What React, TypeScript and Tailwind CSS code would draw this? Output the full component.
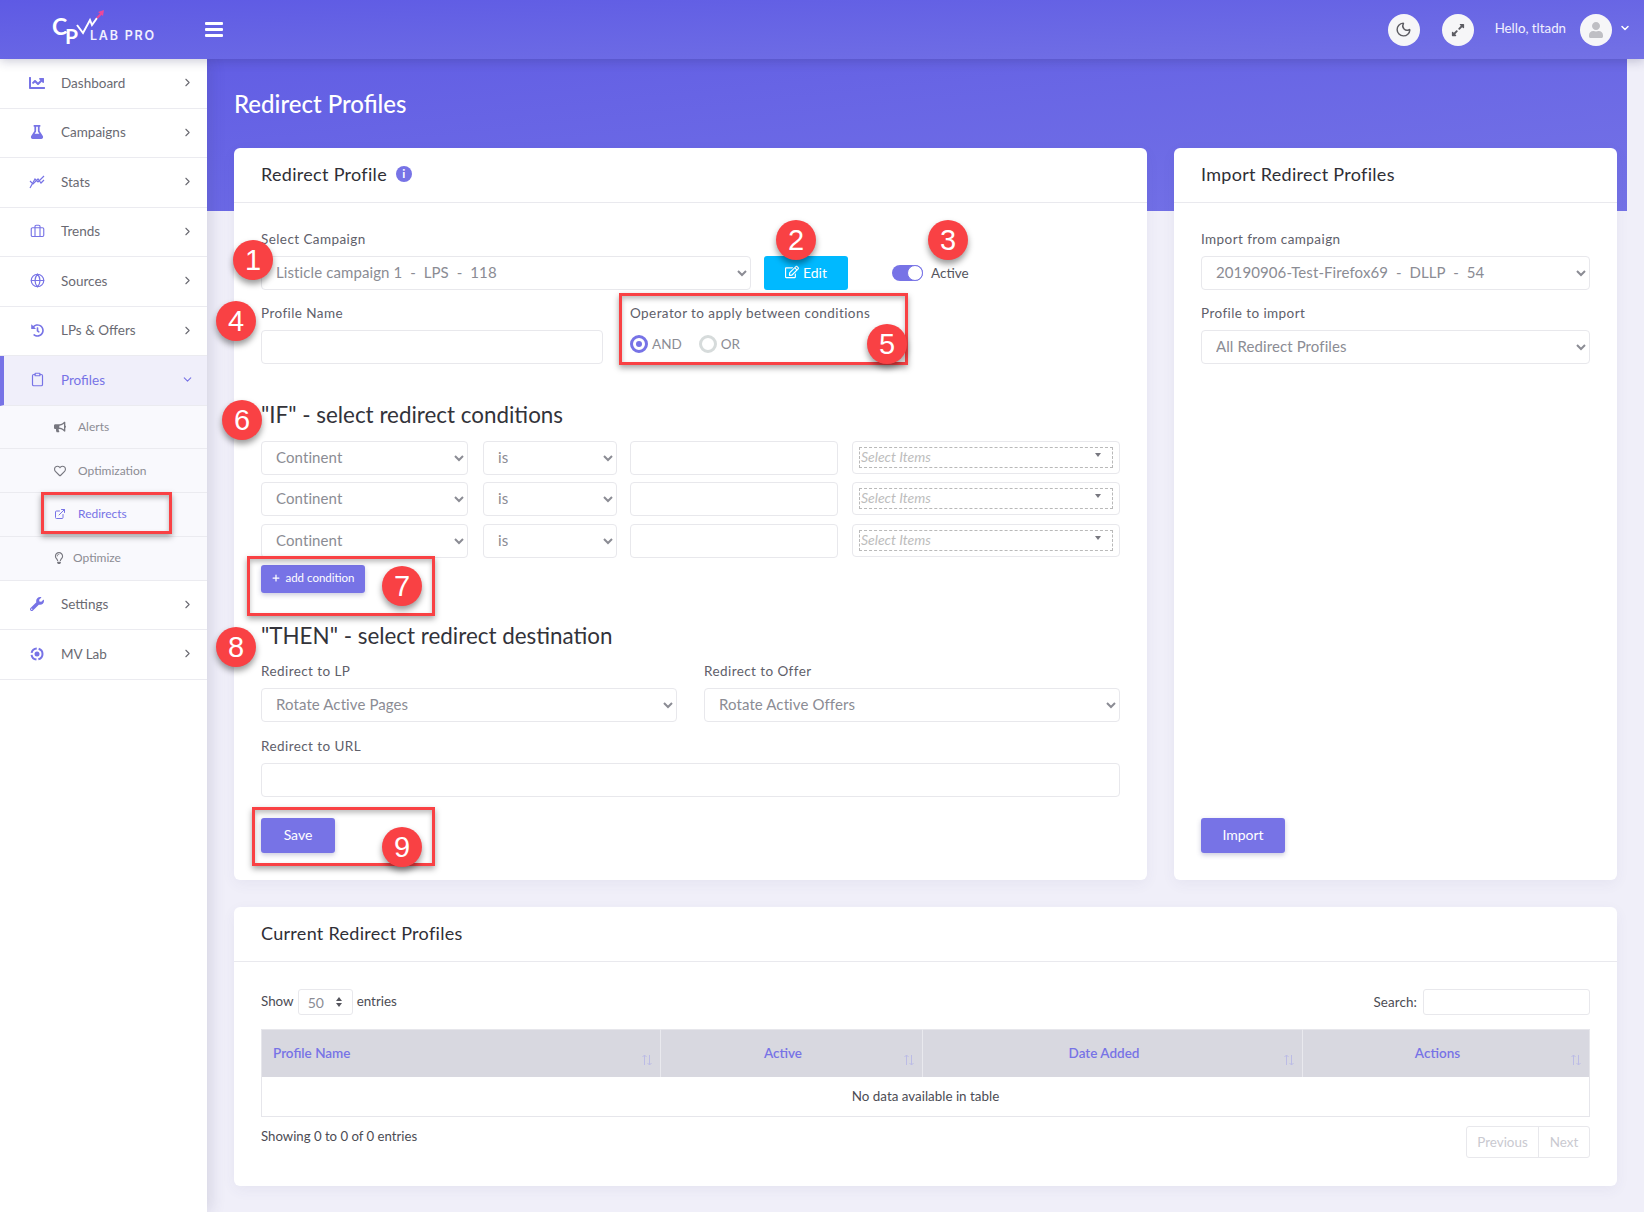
import React from 'react';
import { ChevronRight, ChevronDown, Briefcase, Globe, Clipboard, Moon, Plus, ExternalLink } from 'lucide-react';
import {
  FaChartLine,
  FaFlask,
  FaHistory,
  FaBullhorn,
  FaRegHeart,
  FaRegLightbulb,
  FaWrench,
  FaRegEdit,
  FaExpandAlt,
  FaUser,
} from 'react-icons/fa';

// ── Logo and small drawings ───────────────────────────────────────────────────
function Logo() {
  return (
    <svg width="112" height="46" viewBox="0 0 112 46" className="shrink-0">
      <text x="0" y="28" fill="#fff" fontSize="23" fontWeight="700" fontFamily="Lato, sans-serif">C</text>
      <text x="13" y="37" fill="#fff" fontSize="21" fontWeight="700" fontFamily="Lato, sans-serif">P</text>
      <polyline points="25,18 31,26 38,13 40,18 45,11" fill="none" stroke="#fff" strokeWidth="2" />
      <polyline points="45,11 50,6" fill="none" stroke="#ec4899" strokeWidth="2" />
      <polygon points="46,5 52,3 51,9" fill="#ec4899" />
      <text x="38" y="33" fill="#f1f0ff" fontSize="12.5" letterSpacing="1.8" fontWeight="600" fontFamily="Inter, sans-serif">LAB PRO</text>
    </svg>
  );
}

function StatsIcon() {
  return (
    <svg width="16" height="14" viewBox="0 0 16 14" fill="none" stroke="#7773e6" strokeWidth="1.2">
      <polyline points="1,13 6,4 9,7 15,1" />
      <polyline points="1,6 4,9 9,4 12,8 15,5" />
    </svg>
  );
}

function MvIcon() {
  return (
    <svg width="14" height="14" viewBox="0 0 14 14" fill="none">
      <circle cx="7" cy="7" r="5.5" stroke="#7773e6" strokeWidth="2" strokeDasharray="7 2" />
      <circle cx="7" cy="7" r="2.5" fill="#7773e6" />
    </svg>
  );
}

// ── Sidebar ───────────────────────────────────────────────────────────────────
function NavItem({ icon, label, active }: { icon: React.ReactNode; label: string; active?: boolean }) {
  return (
    <div
      className={`flex h-[49.5px] items-center border-b border-[#ebebf0] pb-[1px] text-[13.5px] ${
        active ? 'border-l-4 border-l-[#7773e6] bg-[#f0effa] pl-[24px] text-[#7773e6]' : 'pl-[28px] text-[#6a6a72]'
      }`}
    >
      <span className="flex w-[18px] justify-center text-[#7773e6]">{icon}</span>
      <span className="ml-[15px] flex-1">{label}</span>
      {active ? (
        <ChevronDown className="mr-[13px] h-[13px] w-[13px] text-[#7773e6]" />
      ) : (
        <ChevronRight className="mr-[13px] h-[13px] w-[13px] text-[#6a6a72]" />
      )}
    </div>
  );
}

function SubItem({ icon, label, active, tight }: { icon: React.ReactNode; label: string; active?: boolean; tight?: boolean }) {
  return (
    <div
      className={`flex h-[43.75px] items-center border-b border-[#ebebf0] bg-[#f9f9fd] text-[12px] ${
        active ? 'text-[#7773e6]' : 'text-[#8c8c94]'
      } ${tight ? 'pl-[53px]' : 'pl-[54px]'}`}
    >
      <span className={`flex w-[12px] justify-center ${active ? 'text-[#7773e6]' : 'text-[#77777f]'}`}>{icon}</span>
      <span className={tight ? 'ml-[8px]' : 'ml-[12px]'}>{label}</span>
    </div>
  );
}

function Sidebar() {
  return (
    <aside className="relative z-10 w-[207px] shrink-0 bg-white shadow-[4px_0_14px_rgba(60,60,100,0.14)]">
      <NavItem icon={<FaChartLine size={16} />} label="Dashboard" />
      <NavItem icon={<FaFlask size={14} />} label="Campaigns" />
      <NavItem icon={<StatsIcon />} label="Stats" />
      <NavItem icon={<Briefcase size={15} strokeWidth={1.8} />} label="Trends" />
      <NavItem icon={<Globe size={15} strokeWidth={1.9} />} label="Sources" />
      <NavItem icon={<FaHistory size={13} />} label="LPs & Offers" />
      <NavItem icon={<Clipboard size={15} strokeWidth={1.9} />} label="Profiles" active />
      <SubItem icon={<FaBullhorn size={12} />} label="Alerts" />
      <SubItem icon={<FaRegHeart size={12} />} label="Optimization" />
      <SubItem icon={<ExternalLink size={12} strokeWidth={2} />} label="Redirects" active />
      <SubItem icon={<FaRegLightbulb size={12} />} label="Optimize" tight />
      <NavItem icon={<FaWrench size={14} />} label="Settings" />
      <NavItem icon={<MvIcon />} label="MV Lab" />
    </aside>
  );
}

// ── Form pieces ───────────────────────────────────────────────────────────────
function Label({ children }: { children: React.ReactNode }) {
  return <div className="mb-[7px] h-[20px] text-[13.5px] leading-[20px] tracking-[0.42px] text-[#60606a]">{children}</div>;
}

function Select({ value, className = '' }: { value: string; className?: string }) {
  return (
    <select
      defaultValue={value}
      className={`h-[34px] rounded-[4px] border border-[#e8e8ec] bg-white pb-[2px] pl-[10px] text-[15px] tracking-[0.1px] text-[#8b8c94] ${className}`}
    >
      <option>{value}</option>
    </select>
  );
}

function TextInput({ className = '' }: { className?: string }) {
  return <input type="text" className={`h-[34px] rounded-[4px] border border-[#e8e8ec] bg-white ${className}`} />;
}

function ConditionRow({ className = '' }: { className?: string }) {
  return (
    <div className={`flex ${className}`}>
      <Select value="Continent" className="w-[207px]" />
      <Select value="is" className="ml-[15px] w-[134px]" />
      <TextInput className="ml-[13px] w-[208px]" />
      <div className="ml-[14px] flex h-[33px] w-[268px] rounded-[4px] border border-[#e8e8ec] px-[6px] py-[5px]">
        <div className="flex flex-1 justify-between border border-dashed border-[#b9b9b9] pl-[1px] pr-[11px] text-[14px] italic leading-[18px] text-[#bdbdbd]">
          <span>Select Items</span>
          <span className="mt-[5px] h-0 w-0 border-x-[3px] border-t-[4px] border-x-transparent border-t-[#77777f]" />
        </div>
      </div>
    </div>
  );
}

function Radio({ on, label }: { on?: boolean; label: string }) {
  return (
    <div className="flex items-center">
      <span
        className={`flex h-[18px] w-[18px] items-center justify-center rounded-full border-[3px] ${
          on ? 'border-[#7773e6]' : 'border-[#d6dbdb]'
        }`}
      >
        {on && <span className="h-[6px] w-[6px] rounded-full bg-[#7773e6]" />}
      </span>
      <span className="ml-[4px] text-[13.5px] text-[#8b8c94]">{label}</span>
    </div>
  );
}

function Button({ children, className = '' }: { children: React.ReactNode; className?: string }) {
  return (
    <button
      type="button"
      className={`flex items-center justify-center rounded-[3px] bg-[#7773e6] pb-[2px] text-white shadow-[0_2px_5px_rgba(80,80,140,0.3)] ${className}`}
    >
      {children}
    </button>
  );
}

function Card({ title, info, className = '', children }: { title: string; info?: boolean; className?: string; children: React.ReactNode }) {
  return (
    <section className={`flex flex-col rounded-[6px] bg-white shadow-[0_4px_14px_rgba(70,70,120,0.06)] ${className}`}>
      <div className="flex h-[55px] shrink-0 items-center border-b border-[#e9e9ee] pb-[2px] pl-[27px] text-[18px] tracking-[0.3px] text-[#2f2f36]">
        {title}
        {info && (
          <span className="ml-[9px] flex h-[16px] w-[16px] items-center justify-center rounded-full bg-[#7773e6] text-[12px] font-bold leading-none text-white">
            i
          </span>
        )}
      </div>
      {children}
    </section>
  );
}

// ── Cards ─────────────────────────────────────────────────────────────────────
function RedirectProfileCard() {
  return (
    <Card title="Redirect Profile" info>
      <div className="flex flex-col px-[27px] pb-[27px] pt-[26px]">
        <div className="flex items-end">
          <div className="w-[490px]">
            <Label>Select Campaign</Label>
            <Select value={'Listicle campaign 1 \u00a0-\u00a0 LPS \u00a0-\u00a0 118'} className="w-full" />
          </div>
          <button
            type="button"
            className="ml-[13px] flex h-[34px] w-[84px] items-center justify-center gap-[4px] rounded-[3px] bg-[#00b9ff] pb-[2px] text-[14px] text-white"
          >
            <FaRegEdit size={14} />
            Edit
          </button>
          <div className="mb-[9px] ml-[44px] flex h-[16px] items-center">
            <span className="flex h-[16px] w-[31px] justify-end rounded-full bg-[#7773e6]">
              <span className="h-[16px] w-[16px] rounded-full border border-[#7773e6] bg-white" />
            </span>
            <span className="ml-[8px] text-[13.5px] text-[#55555d]">Active</span>
          </div>
        </div>

        <div className="mt-[13px] flex">
          <div className="w-[342px]">
            <Label>Profile Name</Label>
            <TextInput className="w-full" />
          </div>
          <div className="ml-[27px]">
            <Label>Operator to apply between conditions</Label>
            <div className="flex gap-[17px] pt-[4px]">
              <Radio on label="AND" />
              <Radio label="OR" />
            </div>
          </div>
        </div>

        <h2 className="mt-[35px] h-[30px] text-[22.4px] leading-[32px] text-[#33333a]">"IF" - select redirect conditions</h2>
        <ConditionRow className="mt-[12px]" />
        <ConditionRow className="mt-[7px]" />
        <ConditionRow className="mt-[8px]" />
        <Button className="mt-[7px] h-[28px] w-[104px] gap-[4px] text-[11.5px]">
          <Plus size={10} strokeWidth={3} />
          add condition
        </Button>

        <h2 className="mt-[27px] h-[30px] text-[22.4px] leading-[32px] text-[#33333a]">"THEN" - select redirect destination</h2>
        <div className="mt-[11px] grid grid-cols-[416px_1fr] gap-x-[27px]">
          <div>
            <Label>Redirect to LP</Label>
            <Select value="Rotate Active Pages" className="w-full" />
          </div>
          <div>
            <Label>Redirect to Offer</Label>
            <Select value="Rotate Active Offers" className="w-full" />
          </div>
        </div>
        <div className="mt-[14px]">
          <Label>Redirect to URL</Label>
          <TextInput className="w-full" />
        </div>
        <Button className="mt-[21px] h-[35px] w-[74px] text-[14px]">Save</Button>
      </div>
    </Card>
  );
}

function ImportCard() {
  return (
    <Card title="Import Redirect Profiles">
      <div className="flex flex-1 flex-col px-[27px] pb-[27px] pt-[26px]">
        <Label>Import from campaign</Label>
        <Select value={'20190906-Test-Firefox69 \u00a0-\u00a0 DLLP \u00a0-\u00a0 54'} className="w-full" />
        <div className="mt-[13px]">
          <Label>Profile to import</Label>
          <Select value="All Redirect Profiles" className="w-full" />
        </div>
        <Button className="mt-auto h-[35px] w-[84px] text-[14px]">Import</Button>
      </div>
    </Card>
  );
}

function SortArrows() {
  return (
    <svg width="12" height="12" viewBox="0 0 12 12" fill="none" stroke="#bcbce6" strokeWidth="1" className="absolute bottom-[11px] right-[7px]">
      <path d="M3.5 11V1M1.5 3l2-2 2 2" />
      <path d="M8.5 1v10M6.5 9l2 2 2-2" />
    </svg>
  );
}

function Th({ label, className = '' }: { label: string; className?: string }) {
  return (
    <th className={`relative h-[47px] border-r border-[#e9e9ee] text-[13.5px] font-semibold text-[#7773e6] last:border-r-0 ${className}`}>
      {label}
      <SortArrows />
    </th>
  );
}

function CurrentProfilesCard() {
  return (
    <Card title="Current Redirect Profiles" className="mt-[27px] h-[279px]">
      <div className="px-[27px] pt-[27px] text-[13.4px] text-[#4c4c54]">
        <div className="flex h-[26px] items-center justify-between">
          <div className="flex items-center pb-[2px]">
            Show
            <span className="mx-[4px] mb-[-2px] flex h-[26px] w-[55px] items-center justify-between rounded-[3px] border border-[#e8e8ec] pl-[9px] pr-[10px] text-[14px] text-[#8b8c94]">
              50
              <span className="flex flex-col gap-[2px]">
                <span className="h-0 w-0 border-x-[3px] border-b-[4px] border-x-transparent border-b-[#55555d]" />
                <span className="h-0 w-0 border-x-[3px] border-t-[4px] border-x-transparent border-t-[#55555d]" />
              </span>
            </span>
            entries
          </div>
          <div className="flex items-center tracking-[0.1px]">
            Search:
            <input type="text" className="ml-[6px] h-[26px] w-[167px] rounded-[3px] border border-[#e8e8ec]" />
          </div>
        </div>

        <table className="mt-[14px] w-full table-fixed border border-[#e6e6eb]">
          <thead>
            <tr className="bg-[#d8d8e0]">
              <Th label="Profile Name" className="w-[399px] pl-[11px] text-left" />
              <Th label="Active" className="w-[262px] pr-[17px]" />
              <Th label="Date Added" className="w-[380px] pr-[17px]" />
              <Th label="Actions" className="pr-[17px]" />
            </tr>
          </thead>
          <tbody>
            <tr>
              <td colSpan={4} className="h-[40px] text-center">
                No data available in table
              </td>
            </tr>
          </tbody>
        </table>

        <div className="mt-[9px] flex items-start justify-between">
          <div className="mt-[1px] text-[13.2px]">Showing 0 to 0 of 0 entries</div>
          <div className="flex h-[32px] rounded-[3px] border border-[#e8e8ec] text-[#c9c9d0]">
            <span className="flex w-[72px] items-center justify-center border-r border-[#e8e8ec]">Previous</span>
            <span className="flex w-[50px] items-center justify-center">Next</span>
          </div>
        </div>
      </div>
    </Card>
  );
}

// ── Annotations drawn over the screenshot ─────────────────────────────────────
function Badge({ n, className }: { n: number; className: string }) {
  return (
    <div
      className={`pointer-events-none absolute z-30 flex h-[40px] w-[40px] items-center justify-center rounded-full bg-[#f94144] text-[29px] leading-none text-white shadow-[0_4px_6px_rgba(0,0,0,0.4)] [font-family:'Liberation_Sans',sans-serif] ${className}`}
    >
      {n}
    </div>
  );
}

function RedBox({ className }: { className: string }) {
  return (
    <div className={`pointer-events-none absolute z-20 border-[3px] border-[#f94144] shadow-[0_3px_6px_rgba(0,0,0,0.35),inset_0_3px_5px_rgba(0,0,0,0.25)] ${className}`} />
  );
}

export default function App() {
  return (
    <div className="relative flex min-h-[1212px] flex-col bg-[#f0eff9] [font-family:Lato,sans-serif]">
      <header className="relative z-20 flex h-[59px] shrink-0 items-center bg-gradient-to-br from-[#5e5ae4] to-[#7371e5] pl-[52px] pr-[13px] shadow-[0_2px_10px_rgba(40,40,90,0.25)]">
        <Logo />
        <div className="ml-[41px] flex w-[18px] flex-col gap-[3px]">
          <span className="h-[3px] rounded-[1px] bg-white" />
          <span className="h-[3px] rounded-[1px] bg-white" />
          <span className="h-[3px] rounded-[1px] bg-white" />
        </div>
        <div className="ml-auto flex items-center">
          <span className="flex h-[32px] w-[32px] items-center justify-center rounded-full bg-[#f6f6f8] text-[#5c5c62]">
            <Moon size={17} strokeWidth={2} />
          </span>
          <span className="ml-[22px] flex h-[32px] w-[32px] items-center justify-center rounded-full bg-[#f6f6f8] text-[#5c5c62]">
            <FaExpandAlt size={14} />
          </span>
          <span className="ml-[21px] pb-[1px] text-[13.3px] text-[#f1f0ff]">Hello, tltadn</span>
          <span className="ml-[14px] flex h-[32px] w-[32px] items-center justify-center rounded-full bg-[#f6f6f8] text-[#bfbfc4]">
            <FaUser size={16} />
          </span>
          <ChevronDown className="mb-[3px] ml-[7px] h-[12px] w-[12px] text-white" strokeWidth={3} />
        </div>
      </header>

      <div className="flex flex-1">
        <Sidebar />
        <main className="relative min-w-0 flex-1 px-[27px]">
          <div className="absolute left-0 right-[17px] top-0 h-[152px] bg-gradient-to-br from-[#625ee4] to-[#7472e6]" />
          <div className="relative">
            <h1 className="flex h-[89px] items-center text-[24px] font-medium text-white">Redirect Profiles</h1>
            <div className="grid grid-cols-[913px_443px] gap-[27px]">
              <RedirectProfileCard />
              <ImportCard />
            </div>
            <CurrentProfilesCard />
          </div>
        </main>
      </div>

      <RedBox className="left-[41px] top-[492px] h-[42px] w-[131px]" />
      <RedBox className="left-[619px] top-[293px] h-[72px] w-[289px]" />
      <RedBox className="left-[247px] top-[556px] h-[60px] w-[188px]" />
      <RedBox className="left-[252px] top-[807px] h-[59px] w-[183px]" />
      <Badge n={1} className="left-[233px] top-[240px]" />
      <Badge n={2} className="left-[776px] top-[220px]" />
      <Badge n={3} className="left-[928px] top-[220px]" />
      <Badge n={4} className="left-[216px] top-[301px]" />
      <Badge n={5} className="left-[867px] top-[324px]" />
      <Badge n={6} className="left-[222px] top-[400px]" />
      <Badge n={7} className="left-[382px] top-[566px]" />
      <Badge n={8} className="left-[216px] top-[627px]" />
      <Badge n={9} className="left-[382px] top-[827px]" />
    </div>
  );
}
